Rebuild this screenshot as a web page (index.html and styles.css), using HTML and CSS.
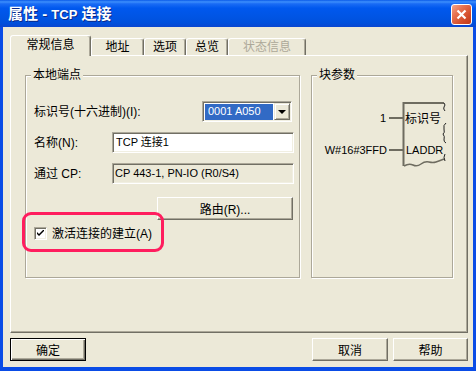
FILE: index.html
```html
<!DOCTYPE html>
<html lang="zh-CN">

<head>
  <meta charset="UTF-8">
  <title>属性 - TCP 连接</title>
  <link rel="stylesheet" href="styles.css">
</head>

<body>

  <div class="window">
    <div class="titlebar">
      <span class="title">属性 - <span class="title-latin">TCP</span> 连接</span>
      <span class="close">
        <svg width="13" height="13" viewBox="0 0 13 13">
          <path d="M2.5 2.5 L10.5 10.5 M10.5 2.5 L2.5 10.5" stroke="#fff" stroke-width="2.2" fill="none" />
        </svg>
      </span>
    </div>

    <div class="client">
      <div class="tabs">
        <div class="tab active">常规信息</div>
        <div class="tab w-addr">地址</div>
        <div class="tab w-opt">选项</div>
        <div class="tab w-opt">总览</div>
        <div class="tab w-state disabled">状态信息</div>
      </div>

      <div class="panel">
        <div class="group local">
          <div class="group-title">本地端点</div>

          <div class="row first">
            <span>标识号(十六进制)(I):</span>
            <div class="combo">
              <span class="combo-value">0001 A050</span>
              <span class="combo-btn"><i class="arrow"></i></span>
            </div>
          </div>

          <div class="row">
            <span class="label">名称(N):</span>
            <div class="field">TCP 连接1</div>
          </div>

          <div class="row">
            <span class="label">通过 CP:</span>
            <div class="field readonly">CP 443-1, PN-IO (R0/S4)</div>
          </div>

          <div class="row route">
            <button class="btn wide">路由(R)...</button>
          </div>

          <div class="row check">
            <span class="checkbox">
              <svg width="7" height="7" viewBox="0 0 7 7">
                <path d="M0 2 L0 4 L2 6 L7 1 L7 -1 L2 4 Z" fill="#000" />
              </svg>
            </span>
            <span class="check-label">激活连接的建立(A)</span>
          </div>
        </div>

        <div class="group params">
          <div class="group-title">块参数</div>
          <svg class="diagram" width="141" height="100" viewBox="0 0 141 100">
            <path d="M132 21 H91.5 V84" stroke="#6e6c60" stroke-width="2" fill="none" />
            <path d="M92 84 q5 -3 9 -1 t8 -1 t8 -2 t7 0 t8 -3" stroke="#6e6c60" stroke-width="1.5" fill="none" />
            <path d="M132 21 q2 2 0 4 q-1 2 1 4" stroke="#222" stroke-width="1" fill="none" />
            <path d="M134 41 q-3 2 -2 6 q1 4 -1 5 q2 2 1 6 q0 2 2 3" stroke="#222" stroke-width="1" fill="none" />
            <path d="M133 72 q-2 3 0 7" stroke="#222" stroke-width="1" fill="none" />
            <path d="M77 36 H91" stroke="#6e6c60" stroke-width="2" />
            <path d="M77 68 H91" stroke="#6e6c60" stroke-width="2" />
            <text class="dia-latin" x="74" y="40" text-anchor="end">1</text>
            <text class="dia-cjk" x="93" y="41">标识号</text>
            <text class="dia-latin" x="75" y="72" text-anchor="end">W#16#3FFD</text>
            <text class="dia-latin" x="94" y="72">LADDR</text>
          </svg>
        </div>

        <div class="highlight"></div>
      </div>

      <div class="buttons">
        <button class="btn default">确定</button>
        <button class="btn cancel">取消</button>
        <button class="btn help">帮助</button>
      </div>
    </div>
  </div>

</body>

</html>
```

FILE: styles.css
```css
* {
  box-sizing: border-box;
}

body {
  margin: 0;
  font-family: "Liberation Sans", "Noto Sans CJK SC", sans-serif;
  font-size: 12px;
  line-height: 14px;
  color: #000;
  background: #fff;
}

.window {
  width: 476px;
  height: 371px;
  display: flex;
  flex-direction: column;
}

/* title bar */
.titlebar {
  height: 27px;
  display: flex;
  align-items: center;
  padding: 1px 4px 0 8px;
  background: linear-gradient(#0a5ae8 0%, #3d8ffc 7%, #1a6cf5 14%, #0058ee 30%, #0054e3 65%, #0050dc 85%, #0a46d0 100%);
}

.title {
  color: #fff;
  font-weight: bold;
  font-size: 15px;
  line-height: 18px;
  text-shadow: 1px 1px 0 #0a2a8a;
}

.title-latin {
  font-size: 13px;
}

.close {
  margin-left: auto;
  width: 21px;
  height: 21px;
  border: 1px solid #fff;
  border-radius: 3px;
  background: linear-gradient(135deg, #f3a58a 0%, #e6704f 35%, #d34d2a 70%, #c0391a 100%);
  display: flex;
  align-items: center;
  justify-content: center;
}

/* client area */
.client {
  flex: 1;
  display: flex;
  flex-direction: column;
  background: #ece9d8;
  border: solid #0a4ce6;
  border-width: 0 3px 4px 3px;
  padding: 8px 5px 0 7px;
}

.tabs {
  display: flex;
  align-items: flex-end;
  height: 20px;
  position: relative;
  z-index: 1;
}

.tab {
  width: 42px;
  height: 17px;
  border: 1px solid;
  border-bottom: 0;
  border-color: #fff #716f64 transparent #fff;
  border-radius: 3px 3px 0 0;
  box-shadow: inset -1px 0 #aca899;
  display: flex;
  align-items: center;
  justify-content: center;
  background: #ece9d8;
}

.tab.active {
  width: 81px;
  height: 21px;
  margin-bottom: -1px;
  padding-bottom: 2px;
}

.tab.w-addr {
  width: 53px;
}

.tab.w-state {
  width: 78px;
}

.tab.disabled {
  color: #aca899;
}

.panel {
  position: relative;
  height: 278px;
  display: flex;
  align-items: flex-start;
  gap: 11px;
  padding: 19px 0 0 14px;
  border: 1px solid;
  border-color: #fff #716f64 #716f64 #fff;
  box-shadow: inset -1px -1px #aca899;
}

/* group boxes */
.group {
  height: 203px;
  border: 1px solid #aca899;
  box-shadow: inset 1px 1px #fff, 1px 1px #fff;
}

.group.local {
  width: 275px;
  padding: 0 5px 0 8px;
}

.group.params {
  width: 142px;
}

.group-title {
  width: fit-content;
  margin: -8px 0 0 5px;
  padding: 0 2px;
  background: #ece9d8;
}

.group.local .group-title {
  margin-left: -3px;
}

.row {
  display: flex;
  align-items: center;
  height: 21px;
  margin-top: 10px;
}

.row.first {
  margin-top: 19px;
}

.row.route {
  height: 23px;
  margin-top: 13px;
}

.row.check {
  height: 13px;
  margin-top: 7px;
}

.label {
  width: 78px;
}

.combo {
  margin-left: auto;
  margin-right: 2px;
  width: 90px;
  height: 21px;
  display: flex;
  border: 1px solid;
  border-color: #aca899 #fff #fff #aca899;
  box-shadow: inset 1px 1px #716f64, inset -1px -1px #f1efe2;
  padding: 2px 1px 1px 2px;
  background: #fff;
}

.combo-value {
  flex: 1;
  background: #316ac5;
  color: #fff;
  font-size: 11px;
  line-height: 15px;
  padding-left: 3px;
}

.combo-btn {
  width: 16px;
  height: 17px;
  margin-top: -1px;
  margin-left: 1px;
  border: 1px solid;
  border-color: #ece9d8 #716f64 #716f64 #ece9d8;
  box-shadow: inset 1px 1px #fff, inset -1px -1px #aca899;
  background: #ece9d8;
  display: flex;
  align-items: center;
  justify-content: center;
}

.arrow {
  width: 0;
  height: 0;
  border-left: 4px solid transparent;
  border-right: 4px solid transparent;
  border-top: 4px solid #000;
}

.field {
  flex: 1;
  height: 21px;
  border: 1px solid;
  border-color: #aca899 #fff #fff #aca899;
  box-shadow: inset 1px 1px #716f64, inset -1px -1px #f1efe2;
  background: #fff;
  font-size: 11px;
  line-height: 19px;
  padding-left: 3px;
  white-space: nowrap;
}

.field.readonly {
  background: #ece9d8;
  padding-left: 2px;
}

/* buttons */
.btn {
  font-family: inherit;
  font-size: 12px;
  color: #000;
  width: 76px;
  height: 23px;
  padding: 0;
  background: #ece9d8;
  border: 1px solid;
  border-color: #fff #716f64 #716f64 #fff;
  box-shadow: inset -1px -1px #aca899;
}

.btn.wide {
  width: 136px;
  margin-left: auto;
  margin-right: 1px;
}

.btn.default {
  border-color: #000;
  box-shadow: inset 1px 1px #fff, inset -1px -1px #716f64, inset -2px -2px #aca899;
}

.buttons {
  display: flex;
  margin-top: 5px;
}

.btn.cancel {
  margin-left: auto;
  margin-right: 5px;
}

.btn.help {
  width: 75px;
}

/* checkbox */
.checkbox {
  width: 13px;
  height: 13px;
  border: 1px solid;
  border-color: #aca899 #fff #fff #aca899;
  box-shadow: inset 1px 1px #716f64, inset -1px -1px #f1efe2;
  background: #fff;
  display: flex;
  align-items: center;
  justify-content: center;
}

.check-label {
  margin-left: 5px;
}

/* block diagram */
.diagram {
  display: block;
}

.dia-latin {
  font-family: "Liberation Sans", sans-serif;
  font-size: 11px;
}

.dia-cjk {
  font-family: "Noto Sans CJK SC", sans-serif;
  font-size: 12px;
}

/* annotation */
.highlight {
  position: absolute;
  left: 11px;
  top: 156px;
  width: 142px;
  height: 40px;
  border: 3px solid #ff1d5e;
  border-radius: 9px;
}
```
